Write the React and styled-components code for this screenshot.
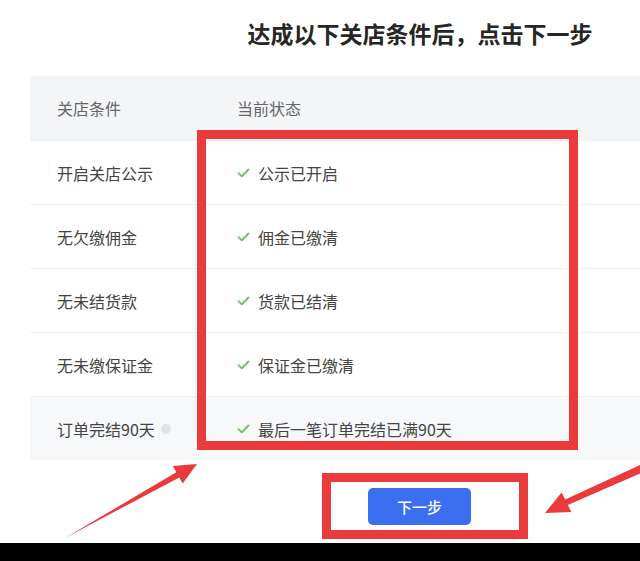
import React from 'react';
import styled, { createGlobalStyle } from 'styled-components';

const GlobalStyle = createGlobalStyle`
  html, body {
    margin: 0;
    padding: 0;
    background: #ffffff;
    overflow: hidden;
  }
  body {
    font-family: 'Noto Sans CJK SC', 'Noto Sans', sans-serif;
  }
`;

const ANNOTATION_RED = '#eb3a3b';

// Layout
const Screen = styled.div`
  position: relative;
  width: 640px;
  height: 561px;
  overflow: hidden;
  display: flex;
  flex-direction: column;
  background: #fff;
`;

const Content = styled.div`
  width: 780px;
  margin-left: 30px;
  display: flex;
  flex-direction: column;
`;

const Title = styled.h1`
  margin: 0;
  padding-top: 17px;
  font-size: 23px;
  line-height: 32px;
  font-weight: 700;
  color: #262626;
  text-align: center;
`;

// Table
const Table = styled.div`
  position: relative;
  margin-top: 27px;
  display: flex;
  flex-direction: column;
`;

const Row = styled.div`
  display: flex;
  align-items: center;
  height: 64px;
  box-sizing: border-box;
  background: ${props => (props.head ? '#f4f5f7' : props.active ? '#f7f8fa' : '#fff')};
  border-top: ${props => (props.head ? 'none' : '1px solid #eeeff1')};
  font-size: 16px;
  color: ${props => (props.head ? '#666' : '#444')};
`;

const ConditionCell = styled.div`
  width: 180px;
  padding-left: 27px;
  box-sizing: border-box;
  display: flex;
  align-items: center;
  gap: 6px;
`;

const StatusCell = styled.div`
  flex: 1;
  padding-left: 27px;
  display: flex;
  align-items: center;
  gap: 8px;
`;

const InfoDot = styled.span`
  width: 10px;
  height: 10px;
  border-radius: 50%;
  background: #e2e3e5;
`;

// Annotations
const HighlightBox = styled.div`
  position: absolute;
  left: 167px;
  top: 54px;
  width: 381px;
  height: 320px;
  box-sizing: border-box;
  border: 9px solid ${ANNOTATION_RED};
  pointer-events: none;
`;

const ActionRow = styled.div`
  margin-top: 13px;
  padding-left: 10px;
  display: flex;
  justify-content: center;
`;

const ActionFrame = styled.div`
  border: 9px solid ${ANNOTATION_RED};
  padding: 6px 48px 5px 37px;
`;

const NextButton = styled.button`
  width: 103px;
  height: 37px;
  border: none;
  border-radius: 5px;
  background: #3b6ff0;
  color: #fff;
  font-family: inherit;
  font-size: 15px;
  font-weight: 500;
  display: block;
  cursor: pointer;
`;

const Footer = styled.div`
  margin-top: auto;
  height: 18px;
  background: #000;
`;

const ArrowLayer = styled.svg`
  position: absolute;
  inset: 0;
  pointer-events: none;
`;

const CheckIcon = () => (
  <svg width="13" height="10" viewBox="0 0 13 10">
    <path d="M1.5 5.2 L4.8 8.3 L11.5 1.5" fill="none" stroke="#6cbf5b" strokeWidth="1.8" strokeLinecap="round" strokeLinejoin="round" />
  </svg>
);

const rows = [
  { condition: '开启关店公示', status: '公示已开启' },
  { condition: '无欠缴佣金', status: '佣金已缴清' },
  { condition: '无未结货款', status: '货款已结清' },
  { condition: '无未缴保证金', status: '保证金已缴清' },
  { condition: '订单完结90天', status: '最后一笔订单完结已满90天', info: true },
];

const App = () => (
  <>
    <GlobalStyle />
    <Screen>
      <Content>
        <Title>达成以下关店条件后，点击下一步</Title>
        <Table>
          <Row head>
            <ConditionCell>关店条件</ConditionCell>
            <StatusCell>当前状态</StatusCell>
          </Row>
          {rows.map((row, i) => (
            <Row key={row.condition} active={i === rows.length - 1}>
              <ConditionCell>
                {row.condition}
                {row.info && <InfoDot />}
              </ConditionCell>
              <StatusCell>
                <CheckIcon />
                {row.status}
              </StatusCell>
            </Row>
          ))}
          <HighlightBox />
        </Table>
        <ActionRow>
          <ActionFrame>
            <NextButton>下一步</NextButton>
          </ActionFrame>
        </ActionRow>
      </Content>
      <Footer />
      <ArrowLayer width="640" height="561" viewBox="0 0 640 561">
        <polygon
          fill={ANNOTATION_RED}
          points="65,538 176.3,472.2 172.9,466.1 197,464 182.7,483.5 179.3,477.4"
        />
        <polygon
          fill={ANNOTATION_RED}
          points="646.7,470.6 567.8,505 571.4,512.1 545,513 561.6,492.5 565.2,499.6 643.3,463.4"
        />
      </ArrowLayer>
    </Screen>
  </>
);

export default App;
